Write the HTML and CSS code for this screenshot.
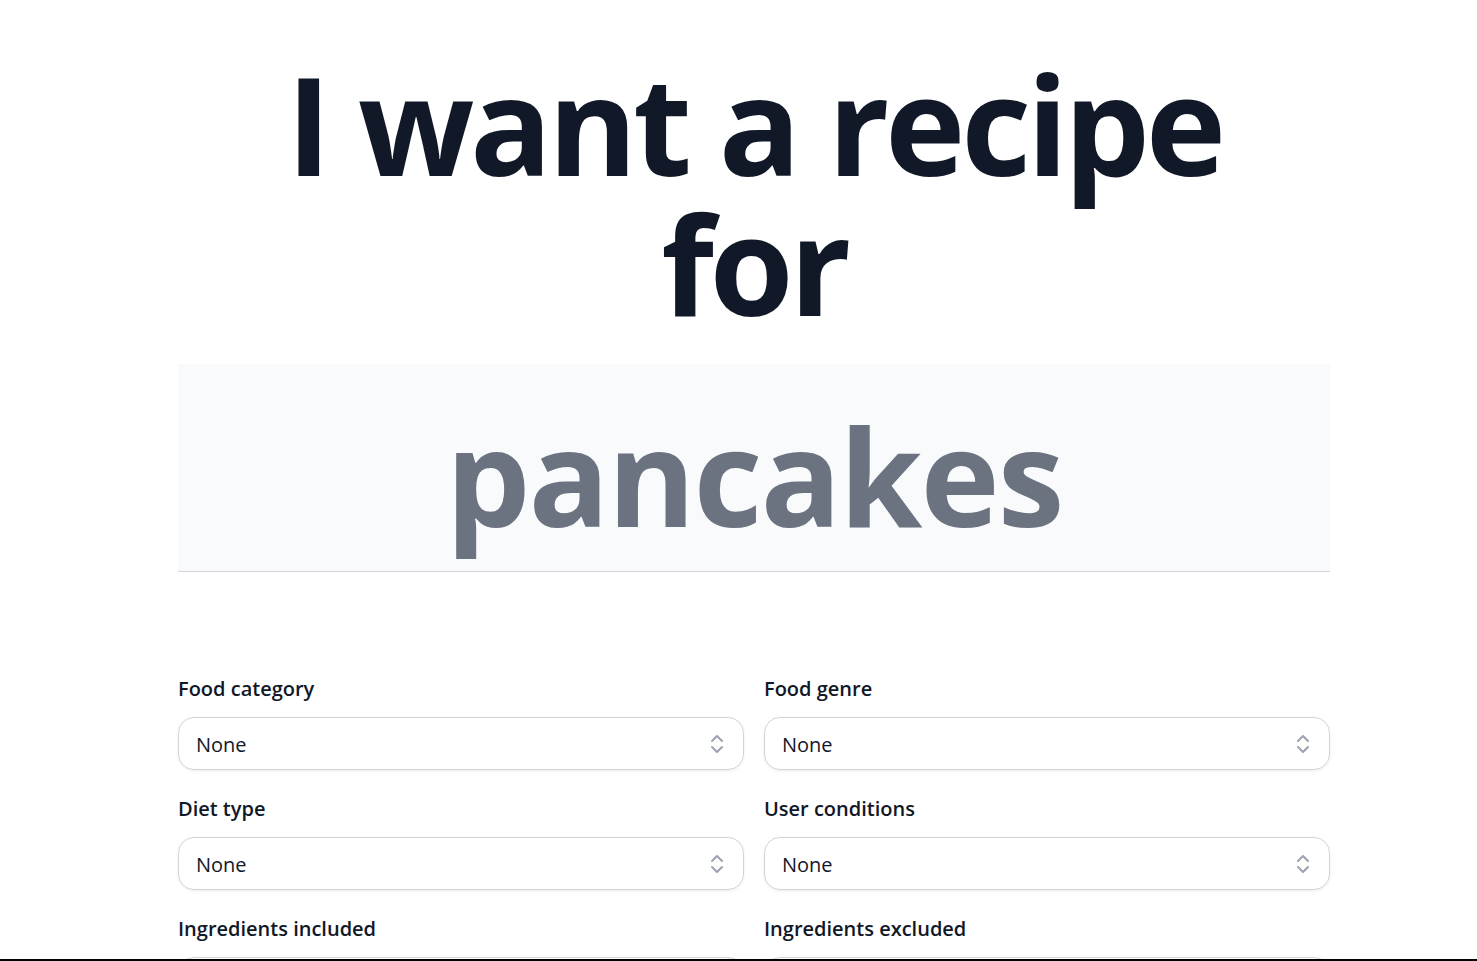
FILE: index.html
```html
<!DOCTYPE html>
<html lang="en">
<head>
    <meta charset="UTF-8">
    <meta name="viewport" content="width=device-width, initial-scale=1.0">
    <title>Recipe Generator</title>
    <link rel="stylesheet" href="styles.css">
</head>
<body>
    <div class="page">
        <div class="container">
            <h1 class="title">I want a recipe for</h1>

            <div class="dish">
                <span class="dish-name">pancakes</span>
            </div>

            <form class="options">
                <div class="field">
                    <label>Food category</label>
                    <div class="select">
                        <span>None</span>
                        <svg viewBox="0 0 24 24" fill="none" stroke="currentColor"><path d="M7 9l5-5 5 5M7 15l5 5 5-5"/></svg>
                    </div>
                </div>
                <div class="field">
                    <label>Food genre</label>
                    <div class="select">
                        <span>None</span>
                        <svg viewBox="0 0 24 24" fill="none" stroke="currentColor"><path d="M7 9l5-5 5 5M7 15l5 5 5-5"/></svg>
                    </div>
                </div>
                <div class="field">
                    <label>Diet type</label>
                    <div class="select">
                        <span>None</span>
                        <svg viewBox="0 0 24 24" fill="none" stroke="currentColor"><path d="M7 9l5-5 5 5M7 15l5 5 5-5"/></svg>
                    </div>
                </div>
                <div class="field">
                    <label>User conditions</label>
                    <div class="select">
                        <span>None</span>
                        <svg viewBox="0 0 24 24" fill="none" stroke="currentColor"><path d="M7 9l5-5 5 5M7 15l5 5 5-5"/></svg>
                    </div>
                </div>
                <div class="field">
                    <label>Ingredients included</label>
                    <div class="select input"></div>
                </div>
                <div class="field">
                    <label>Ingredients excluded</label>
                    <div class="select input"></div>
                </div>
            </form>
        </div>
    </div>
    <div class="bottom-bar"></div>
</body>
</html>
```

FILE: styles.css
```css
body {
    font-family: "Open Sans", "Noto Sans", sans-serif;
    background-color: #ffffff;
    color: #111827;
    margin: 0;
}
.page {
    padding-left: 31px;
}
.container {
    max-width: 1152px;
    margin: 0 auto;
}
.title {
    font-size: 136px;
    font-weight: 700;
    line-height: 140px;
    letter-spacing: -4.3px;
    text-align: center;
    margin: 0;
    padding-top: 54px;
    color: #111827;
}
.dish {
    margin-top: 30px;
    height: 207px;
    background-color: #f9fafb;
    border-bottom: 1px solid #d1d5db;
    display: flex;
    justify-content: center;
    align-items: flex-end;
}
.dish-name {
    font-size: 134px;
    font-weight: 700;
    line-height: 1;
    letter-spacing: -2px;
    color: #6b7280;
    padding-bottom: 29px;
}
.options {
    margin-top: 103px;
    display: grid;
    grid-template-columns: 1fr 1fr;
    column-gap: 20px;
    row-gap: 25px;
}
.field label {
    display: block;
    font-size: 20px;
    font-weight: 600;
    line-height: 28px;
    margin-bottom: 14px;
    color: #111827;
}
.select {
    height: 49px;
    border: 1px solid #d1d5db;
    border-radius: 16px;
    box-shadow: 0 1px 3px rgba(0, 0, 0, 0.08);
    display: flex;
    align-items: center;
    justify-content: space-between;
    padding: 2px 14px 0 17px;
    font-size: 20px;
    color: #111827;
}
.select svg {
    width: 24px;
    height: 24px;
    margin-top: -2px;
    color: #9ca3af;
    stroke-width: 2;
    stroke-linecap: round;
    stroke-linejoin: round;
}
.bottom-bar {
    position: fixed;
    left: 0;
    right: 0;
    bottom: 0;
    height: 2px;
    background-color: #000000;
}
```
